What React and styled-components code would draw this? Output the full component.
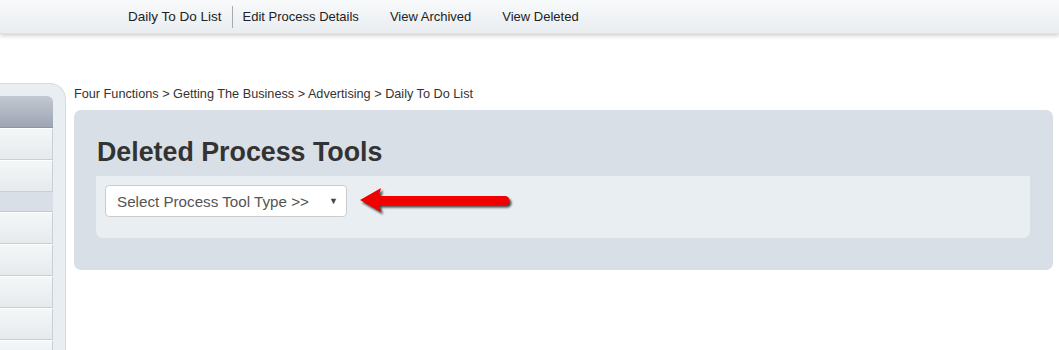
import React from 'react';
import styled, { createGlobalStyle } from 'styled-components';

const GlobalStyle = createGlobalStyle`
  body {
    margin: 0;
    background: #fff;
    font-family: "Liberation Sans", Arial, sans-serif;
    color: #333;
    overflow: hidden;
  }
`;

const TopBar = styled.header`
  height: 33px;
  background: linear-gradient(#f8fafb, #e9edf0);
  box-shadow: 0 2px 4px rgba(0, 0, 0, 0.18);
  border-bottom: 1px solid #dde2e6;
  display: flex;
  align-items: center;
  padding-left: 128px;
`;

const NavLink = styled.a`
  font-size: ${(p) => (p.$first ? '13.5px' : '13px')};
  color: #222;
  text-decoration: none;
  padding-right: ${(p) => (p.$first ? '10px' : '0')};
  margin-right: ${(p) => p.$gap || 0}px;
  border-right: ${(p) => (p.$first ? '1px solid #aaa' : 'none')};
  line-height: 22px;
`;

const Body = styled.div`
  display: flex;
  margin-top: 49px;
  padding-right: 6px;
`;

const Sidebar = styled.aside`
  width: 53px;
  height: 266px;
  background: #e9eef2;
  border: 1px solid #d5dce2;
  border-left: none;
  border-bottom: none;
  border-top-right-radius: 16px;
  padding: 12px 12px 0 0;
  flex-shrink: 0;
  overflow: hidden;
`;

const SideHeader = styled.div`
  height: 31px;
  background: linear-gradient(#c3c9d2, #9ea5b3);
  border-top-right-radius: 6px;
  border-bottom: 1px solid #8f96a3;
`;

const SideRow = styled.div`
  height: 30px;
  background: linear-gradient(#f4f7f8, #e6eaed);
  border-right: 1px solid #c9cfd5;
  border-bottom: 1px solid #c9cfd5;
  border-top: 1px solid #fff;
`;

const SideGroup = styled.div`
  height: 19px;
  background: #d8dfe6;
  border-bottom: 1px solid #c3cad1;
`;

const Content = styled.main`
  flex: 1;
  margin-left: 8px;
  padding-top: 4px;
`;

const Breadcrumb = styled.div`
  font-size: 12.7px;
  color: #333;
  height: 23px;
`;

const Panel = styled.section`
  background: #d8dfe6;
  border-radius: 7px;
  padding: 26px 23px 32px 22px;
`;

const Title = styled.h1`
  margin: 0 0 8px 1px;
  font-size: 26.8px;
  font-weight: bold;
  color: #333;
  line-height: 32px;
`;

const ToolBox = styled.div`
  background: #e9eef2;
  border-radius: 0 0 7px 7px;
  padding: 9px 9px 21px;
  display: flex;
  align-items: center;
`;

const SelectBox = styled.div`
  width: 221px;
  height: 30px;
  background: #fff;
  border: 1px solid #ccc;
  border-radius: 4px;
  display: flex;
  align-items: center;
  justify-content: space-between;
  padding: 0 8px 0 11px;
  font-size: 15.2px;
  color: #555;
`;

const Caret = styled.span`
  font-size: 9px;
  color: #444;
`;

const ArrowSvg = styled.svg`
  margin-left: 11px;
`;

const arrowPath = 'M2 14 L23 2 L21 10 L147 10 A4.5 4.5 0 0 1 147 19 L21 19 L23 26 Z';

const Arrow = () => (
  <ArrowSvg width="160" height="30" viewBox="0 0 160 30">
    <defs>
      <filter id="sh" x="-10%" y="-50%" width="120%" height="200%">
        <feGaussianBlur stdDeviation="1.3" />
      </filter>
    </defs>
    <g transform="translate(2,2.5)" fill="#333" filter="url(#sh)" opacity="0.9">
      <path d={arrowPath} />
    </g>
    <path d={arrowPath} fill="#f20000" />
  </ArrowSvg>
);

export default function App() {
  return (
    <>
      <GlobalStyle />
      <TopBar>
        <NavLink href="#" $first $gap={10}>Daily To Do List</NavLink>
        <NavLink href="#" $gap={31}>Edit Process Details</NavLink>
        <NavLink href="#" $gap={31}>View Archived</NavLink>
        <NavLink href="#">View Deleted</NavLink>
      </TopBar>
      <Body>
        <Sidebar>
          <SideHeader />
          <SideRow />
          <SideRow />
          <SideGroup />
          <SideRow />
          <SideRow />
          <SideRow />
          <SideRow />
          <SideRow />
        </Sidebar>
        <Content>
          <Breadcrumb>Four Functions &gt; Getting The Business &gt; Advertising &gt; Daily To Do List</Breadcrumb>
          <Panel>
            <Title>Deleted Process Tools</Title>
            <ToolBox>
              <SelectBox>
                <span>Select Process Tool Type &gt;&gt;</span>
                <Caret>▼</Caret>
              </SelectBox>
              <Arrow />
            </ToolBox>
          </Panel>
        </Content>
      </Body>
    </>
  );
}
